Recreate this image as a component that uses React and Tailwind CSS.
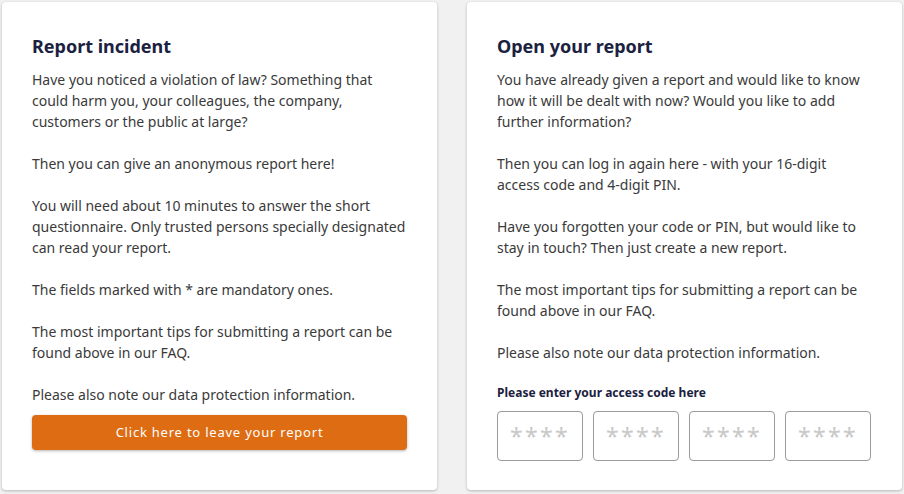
const leftParagraphs = [
  'Have you noticed a violation of law? Something that could harm you, your colleagues, the company, customers or the public at large?',
  'Then you can give an anonymous report here!',
  'You will need about 10 minutes to answer the short questionnaire. Only trusted persons specially designated can read your report.',
  'The fields marked with * are mandatory ones.',
  'The most important tips for submitting a report can be found above in our FAQ.',
  'Please also note our data protection information.',
];

const rightParagraphs = [
  'You have already given a report and would like to know how it will be dealt with now? Would you like to add further information?',
  'Then you can log in again here - with your 16-digit access code and 4-digit PIN.',
  'Have you forgotten your code or PIN, but would like to stay in touch? Then just create a new report.',
  'The most important tips for submitting a report can be found above in our FAQ.',
  'Please also note our data protection information.',
];

function Card({ title, paragraphs, padRight, children }) {
  return (
    <section
      className={`w-[435px] h-[488px] bg-white rounded-[4px] shadow-[0_1px_3px_rgba(0,0,0,0.25)] pl-[30px] pt-[32px] shrink-0 ${padRight}`}
    >
      <h2 className="text-[18px] leading-[24px] font-bold text-[#1b2140] mb-[11px]">{title}</h2>
      {paragraphs.map((p, i) => (
        <p
          key={i}
          className={`text-[14px] leading-[21px] text-[#3a3a3a] ${i < paragraphs.length - 1 ? 'mb-[21px]' : ''}`}
        >
          {p}
        </p>
      ))}
      {children}
    </section>
  );
}

export default function App() {
  return (
    <div
      className="w-[904px] h-[494px] bg-[#f1f1f1] flex gap-[30px] pl-[2px] pt-[2px] overflow-hidden"
      style={{ fontFamily: '"Noto Sans", "Open Sans", sans-serif' }}
    >
      <Card title="Report incident" paragraphs={leftParagraphs} padRight="pr-[27px]">
        <button
          type="button"
          className="mt-[10px] w-[375px] h-[35px] rounded-[4px] bg-[#dd6c12] text-white text-[13px] tracking-[0.06em] shadow-[0_1px_3px_rgba(0,0,0,0.3)]"
        >
          Click here to leave your report
        </button>
      </Card>
      <Card title="Open your report" paragraphs={rightParagraphs} padRight="pr-[31px]">
        <div className="mt-[22px] text-[12px] leading-[16px] font-bold text-[#1b2140]">
          Please enter your access code here
        </div>
        <div className="mt-[10px] flex gap-[10px]">
          {[0, 1, 2, 3].map((i) => (
            <input
              key={i}
              type="text"
              placeholder="****"
              className="w-[86px] h-[50px] rounded-[4px] border border-[#9a9a9a] text-center text-[23px] tracking-[0.1em] placeholder:text-[#c8c8c8] outline-none"
            />
          ))}
        </div>
      </Card>
    </div>
  );
}
